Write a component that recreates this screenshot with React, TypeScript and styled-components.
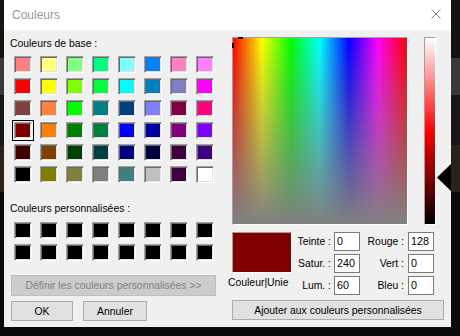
import React from "react";
import styled, { createGlobalStyle } from "styled-components";

const Global = createGlobalStyle`
  html, body { margin: 0; padding: 0; }
  body {
    width: 460px;
    height: 336px;
    overflow: hidden;
    font-family: "Liberation Sans", Arial, sans-serif;
    background: linear-gradient(to bottom, #151210 0 58px, #3a3838 58px 95px, #1b1716 95px 145px, #2b2119 145px 192px, #0b0909 192px);
  }
`;

const Desktop = styled.div`
  padding-left: 4px;
  height: 336px;
  box-sizing: border-box;
`;

const Dialog = styled.div`
  width: 447px;
  height: 327px;
  background: #f0f0f0;
  display: flex;
  flex-direction: column;
`;

const TitleBar = styled.div`
  height: 30px;
  flex: none;
  background: #ffffff;
  display: flex;
  align-items: center;
  justify-content: space-between;
  padding: 0 10px 0 8px;
`;

const Title = styled.span`
  font-size: 12px;
  color: #9a9a9a;
`;

const CloseIcon = styled.svg`
  width: 10px;
  height: 10px;
  margin-bottom: 2px;
`;

const Body = styled.div`
  flex: 1;
  display: flex;
`;

const LeftCol = styled.div`
  width: 224px;
  flex: none;
  box-sizing: border-box;
  padding: 8px 0 0 6px;
  display: flex;
  flex-direction: column;
`;

const Heading = styled.div<{ $mt?: number }>`
  font-size: 10.4px;
  line-height: 12px;
  height: 12px;
  color: #000;
  margin-top: ${(p) => p.$mt ?? 0}px;
`;

const SwatchGrid = styled.div<{ $mt: number }>`
  display: grid;
  grid-template-columns: repeat(8, 18px);
  grid-auto-rows: 17px;
  column-gap: 8px;
  row-gap: 5px;
  margin: ${(p) => p.$mt}px 0 0 4px;
`;

const Swatch = styled.div<{ $c: string; $sel?: boolean }>`
  box-sizing: border-box;
  background: ${(p) => p.$c};
  border: 1px solid;
  border-color: #a0a0a0 #ffffff #ffffff #a0a0a0;
  box-shadow: inset 1px 1px #696969, inset -1px -1px #e3e3e3;
  outline: ${(p) => (p.$sel ? "1px solid #000" : "none")};
  outline-offset: 1px;
`;

const Button = styled.button<{ $w: number; $h?: number }>`
  box-sizing: border-box;
  width: ${(p) => p.$w}px;
  height: ${(p) => p.$h ?? 20}px;
  padding: 0;
  background: #e1e1e1;
  border: 1px solid #adadad;
  font-family: "Liberation Sans", Arial, sans-serif;
  font-size: 10.4px;
  color: #000;
  &:disabled {
    background: #cccccc;
    border-color: #bfbfbf;
    color: #838383;
  }
`;

const DefineButton = styled(Button)`
  margin: 14px 0 0 1px;
`;

const ButtonRow = styled.div`
  display: flex;
  gap: 10px;
  margin: 5px 0 0 1px;
`;

const RightCol = styled.div`
  flex: 1;
  padding-top: 7px;
  display: flex;
  flex-direction: column;
`;

const SpectrumRow = styled.div`
  display: flex;
  gap: 16px;
  margin-left: 4px;
`;

const Spectrum = styled.div`
  position: relative;
  box-sizing: border-box;
  width: 176px;
  height: 188px;
  border: 1px solid;
  border-color: #a0a0a0 #ffffff #ffffff #a0a0a0;
  background:
    linear-gradient(to bottom, rgba(128, 128, 128, 0), rgba(128, 128, 128, 1)),
    linear-gradient(to right, #ff0000, #ffff00, #00ff00, #00ffff, #0000ff, #ff00ff, #ff0000);
`;

const CrossArm = styled.span<{ $h?: boolean }>`
  position: absolute;
  background: #000;
  left: ${(p) => (p.$h ? 5 : -1)}px;
  top: ${(p) => (p.$h ? -1 : 5)}px;
  width: ${(p) => (p.$h ? 5 : 2)}px;
  height: ${(p) => (p.$h ? 2 : 5)}px;
`;

const LumWrap = styled.div`
  position: relative;
  width: 12px;
  height: 188px;
`;

const LumBar = styled.div`
  box-sizing: border-box;
  width: 12px;
  height: 188px;
  border: 1px solid;
  border-color: #a0a0a0 #ffffff #ffffff #a0a0a0;
  background: linear-gradient(to bottom, #ffffff, #ff0000, #000000);
`;

const Pointer = styled.svg`
  position: absolute;
  left: 13px;
  width: 14px;
  height: 27px;
`;

const Fields = styled.div`
  display: grid;
  grid-template-columns: 64px 42px 26px 48px 26px;
  grid-template-rows: repeat(3, 19px);
  row-gap: 3px;
  margin-top: 7px;
`;

const Preview = styled.div<{ $c: string }>`
  grid-column: 1;
  grid-row: 1 / 3;
  box-sizing: border-box;
  margin-left: 4px;
  width: 60px;
  height: 41px;
  background: ${(p) => p.$c};
  border: 1px solid;
  border-color: #a0a0a0 #ffffff #ffffff #a0a0a0;
`;

const Caption = styled.div`
  grid-column: 1;
  grid-row: 3;
  font-size: 10.4px;
  line-height: 12px;
  margin-top: 1px;
  color: #000;
  white-space: nowrap;
`;

const Label = styled.div<{ $pr: number }>`
  font-size: 10.4px;
  line-height: 19px;
  text-align: right;
  padding-right: ${(p) => p.$pr}px;
  color: #000;
  white-space: nowrap;
`;

const Field = styled.div`
  box-sizing: border-box;
  height: 19px;
  width: 26px;
  background: #fff;
  border: 1px solid #7a7a7a;
  font-size: 10.8px;
  line-height: 17px;
  padding-left: 2px;
  color: #000;
`;

const AddButton = styled(Button)`
  margin: 5px 0 0 4px;
`;

const base = [
  ["#FF8080", "#FFFF80", "#80FF80", "#00FF80", "#80FFFF", "#0080FF", "#FF80C0", "#FF80FF"],
  ["#FF0000", "#FFFF00", "#80FF00", "#00FF40", "#00FFFF", "#0080C0", "#8080C0", "#FF00FF"],
  ["#804040", "#FF8040", "#00FF00", "#008080", "#004080", "#8080FF", "#800040", "#FF0080"],
  ["#800000", "#FF8000", "#008000", "#008040", "#0000FF", "#0000A0", "#800080", "#8000FF"],
  ["#400000", "#804000", "#004000", "#004040", "#000080", "#000040", "#400040", "#400080"],
  ["#000000", "#808000", "#808040", "#808080", "#408080", "#C0C0C0", "#400040", "#FFFFFF"],
];

const lum = 60;
const pointerTop = 1 + ((240 - lum) / 240) * 186 - 13.5;

export default function App() {
  return (
    <>
      <Global />
      <Desktop>
        <Dialog>
          <TitleBar>
            <Title>Couleurs</Title>
            <CloseIcon viewBox="0 0 10 10">
              <path d="M0.5 0.5L9.5 9.5M9.5 0.5L0.5 9.5" stroke="#8a8a8a" strokeWidth="1" fill="none" />
            </CloseIcon>
          </TitleBar>
          <Body>
            <LeftCol>
              <Heading>Couleurs de base :</Heading>
              <SwatchGrid $mt={6}>
                {base.flat().map((c, i) => (
                  <Swatch key={i} $c={c} $sel={i === 24} />
                ))}
              </SwatchGrid>
              <Heading $mt={20}>Couleurs personnalisées :</Heading>
              <SwatchGrid $mt={7}>
                {Array.from({ length: 16 }).map((_, i) => (
                  <Swatch key={i} $c="#000000" />
                ))}
              </SwatchGrid>
              <DefineButton $w={205} $h={21} disabled>
                Définir les couleurs personnalisées &gt;&gt;
              </DefineButton>
              <ButtonRow>
                <Button $w={62}>OK</Button>
                <Button $w={64}>Annuler</Button>
              </ButtonRow>
            </LeftCol>
            <RightCol>
              <SpectrumRow>
                <Spectrum>
                  <CrossArm $h />
                  <CrossArm />
                </Spectrum>
                <LumWrap>
                  <LumBar />
                  <Pointer viewBox="0 0 14 27" style={{ top: pointerTop }}>
                    <polygon points="0,13.5 14,0 14,27" fill="#000" />
                  </Pointer>
                </LumWrap>
              </SpectrumRow>
              <Fields>
                <Preview $c="#800000" />
                <Caption>Couleur|Unie</Caption>
                <Label $pr={3}>Teinte :</Label>
                <Field>0</Field>
                <Label $pr={4}>Rouge :</Label>
                <Field>128</Field>
                <Label $pr={3}>Satur. :</Label>
                <Field>240</Field>
                <Label $pr={4}>Vert :</Label>
                <Field>0</Field>
                <Label $pr={3}>Lum. :</Label>
                <Field>60</Field>
                <Label $pr={4}>Bleu :</Label>
                <Field>0</Field>
              </Fields>
              <AddButton $w={212}>Ajouter aux couleurs personnalisées</AddButton>
            </RightCol>
          </Body>
        </Dialog>
      </Desktop>
    </>
  );
}
